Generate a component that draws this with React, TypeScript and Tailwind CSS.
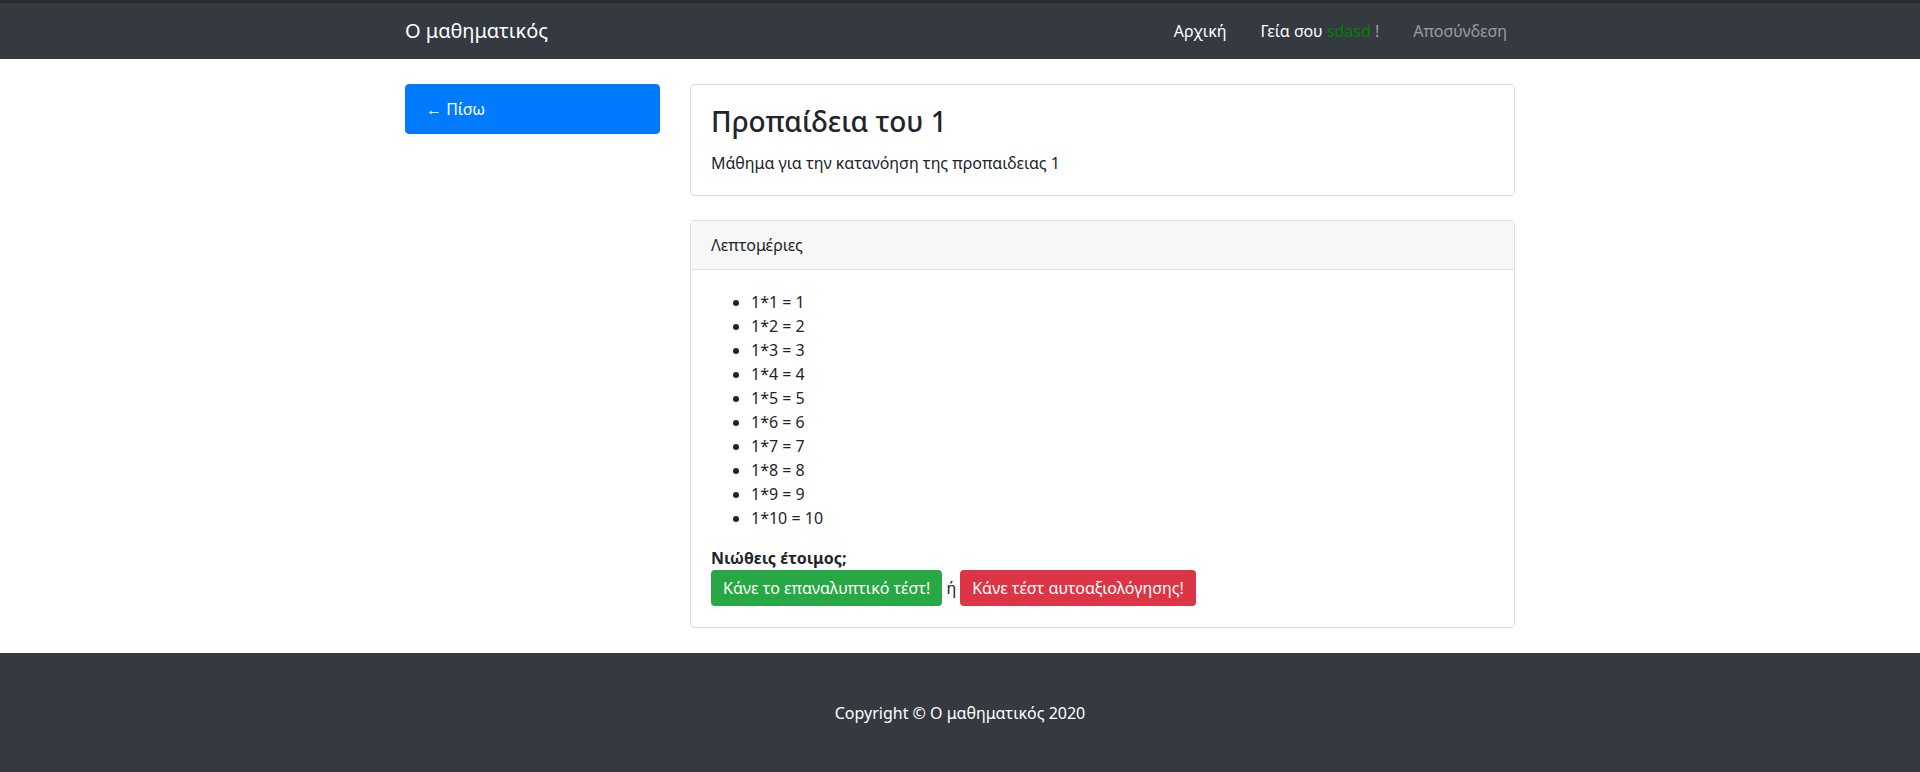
const items = [1, 2, 3, 4, 5, 6, 7, 8, 9, 10];

const App = () => {
  return (
    <div className="w-full bg-white text-[#212529] font-['Noto_Sans',sans-serif] text-base leading-6">
      <div className="h-[3px] bg-[#2b2b2b]" />
      {/* navbar */}
      <nav className="h-14 bg-[#343a40]">
        <div className="mx-auto flex h-full w-[1140px] items-center justify-between px-[15px]">
          <span className="text-xl leading-[30px] text-white">Ο μαθηματικός</span>
          <div className="flex items-center gap-[18px]">
            <span className="px-2 text-white">Αρχική</span>
            <span className="px-2 text-white">
              Γεία σου <span className="text-[#008000]">sdasd</span>{" "}
              <span className="text-white/50">!</span>
            </span>
            <span className="px-2 text-white/50">Αποσύνδεση</span>
          </div>
        </div>
      </nav>

      <div className="mx-auto flex w-[1140px] gap-[30px] px-[15px] pt-[25px] pb-[25px]">
        <div className="w-[255px] shrink-0">
          <div className="rounded border border-[#007bff] bg-[#007bff] px-5 py-3 text-white">← Πίσω</div>
        </div>

        <div className="flex-1">
          <div className="rounded border border-[#dfdfdf] p-5">
            <h3 className="mb-3 text-[28px] leading-[1.2] font-medium">Προπαίδεια του 1</h3>
            <p>Μάθημα για την κατανόηση της προπαιδειας 1</p>
          </div>

          <div className="mt-6 rounded border border-[#dfdfdf]">
            <div className="border-b border-[#dfdfdf] bg-[#f7f7f7] px-5 py-3">Λεπτομέριες</div>
            <div className="p-5 pb-[21px]">
              <ul className="mb-4 list-disc pl-10">
                {items.map((n) => (
                  <li key={n}>
                    1*{n} = {n}
                  </li>
                ))}
              </ul>
              <p className="font-bold">Νιώθεις έτοιμος;</p>
              <div className="flex items-center">
                <button className="rounded bg-[#28a745] px-3 py-1.5 text-white">Κάνε το επαναλυπτικό τέστ!</button>
                <span className="mx-1">ή</span>
                <button className="rounded bg-[#dc3545] px-3 py-1.5 text-white">Κάνε τέστ αυτοαξιολόγησης!</button>
              </div>
            </div>
          </div>
        </div>
      </div>

      <footer className="bg-[#343a40] py-12">
        <p className="text-center text-white">Copyright © Ο μαθηματικός 2020</p>
      </footer>
    </div>
  );
};

export default App;
